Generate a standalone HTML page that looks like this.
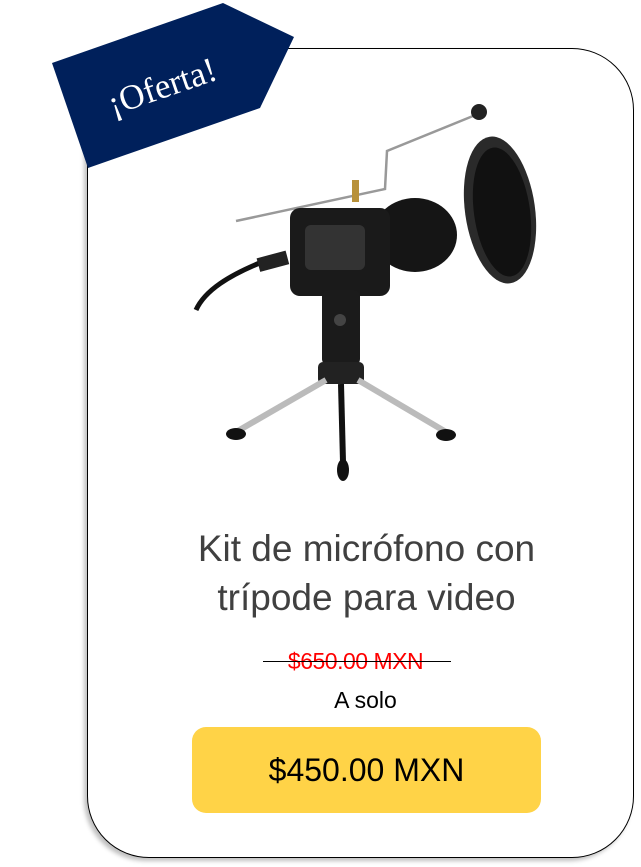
<!DOCTYPE html>
<html><head><meta charset="utf-8"><style>
body{margin:0;width:641px;height:867px;background:#fff;position:relative;overflow:hidden;font-family:"Liberation Sans",sans-serif}
.card{position:absolute;left:87px;top:48px;width:545px;height:808px;border:1.3px solid #000;border-radius:62px;box-shadow:-3px 3px 4px rgba(0,0,0,0.25);background:#fff}
.t{position:absolute;left:0;width:641px;text-align:center}
</style></head><body>
<div class="card"></div>
<svg width="641" height="867" style="position:absolute;left:0;top:0">
<polygon points="52,63 223,3 294,37 260,108 88,168" fill="#00205b"/>
<text x="162" y="98" transform="rotate(-19 162 86)" font-family="Liberation Serif,serif" font-size="35" fill="#fff" text-anchor="middle">¡Oferta!</text>
<polyline points="236,221 385,189 387,151 473,116" fill="none" stroke="#999" stroke-width="2.5"/>
<circle cx="479" cy="112" r="8" fill="#222"/>
<ellipse cx="500" cy="210" rx="35" ry="74" transform="rotate(-8 500 210)" fill="#2a2a2a"/>
<ellipse cx="502" cy="212" rx="28" ry="65" transform="rotate(-8 502 212)" fill="#111"/>
<path d="M262,262 C230,275 205,290 196,310" fill="none" stroke="#111" stroke-width="5"/>
<rect x="258" y="255" width="30" height="14" fill="#222" transform="rotate(-15 270 262)"/>
<rect x="352" y="180" width="7" height="22" fill="#b8913a"/>
<ellipse cx="415" cy="235" rx="42" ry="37" fill="#151515"/>
<rect x="290" y="208" width="100" height="88" rx="10" fill="#1a1a1a"/>
<rect x="305" y="225" width="60" height="45" rx="6" fill="#333"/>
<rect x="322" y="290" width="38" height="75" rx="6" fill="#1b1b1b"/>
<circle cx="340" cy="320" r="6" fill="#444"/>
<rect x="318" y="362" width="46" height="22" rx="5" fill="#222"/>
<line x1="326" y1="380" x2="236" y2="432" stroke="#bbb" stroke-width="6"/>
<line x1="358" y1="380" x2="446" y2="432" stroke="#bbb" stroke-width="6"/>
<line x1="341" y1="384" x2="343" y2="462" stroke="#111" stroke-width="6"/>
<ellipse cx="236" cy="434" rx="10" ry="6" fill="#111"/>
<ellipse cx="446" cy="435" rx="10" ry="6" fill="#111"/>
<ellipse cx="343" cy="470" rx="6" ry="11" fill="#111"/>
</svg>
<div class="t" style="top:524px;left:46px;font-size:37px;line-height:49px;color:#404040">Kit de micrófono con<br>trípode para video</div>
<div class="t" style="top:648px;left:35px;font-size:23px;color:#f00;letter-spacing:-0.5px">$650.00 MXN</div>
<div style="position:absolute;left:263px;top:661px;width:188px;height:1px;background:#000"></div>
<div class="t" style="top:687px;left:45px;font-size:23px;color:#000">A solo</div>
<div style="position:absolute;left:192px;top:727px;width:349px;height:86px;background:#ffd347;border-radius:14px;text-align:center;line-height:86px;font-size:32px;color:#000">$450.00 MXN</div>
</body></html>
